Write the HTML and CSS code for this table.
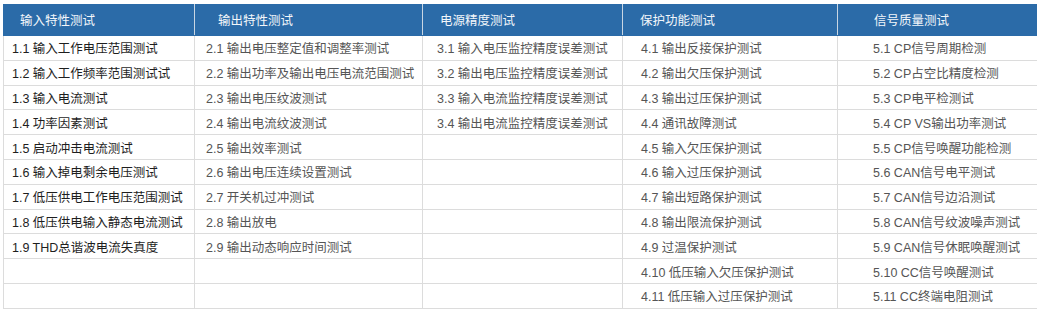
FILE: index.html
```html
<!DOCTYPE html>
<html lang="zh-CN">
<head>
  <meta charset="UTF-8">
  <title>测试项目</title>
  <link rel="stylesheet" href="styles.css">
</head>
<body>

  <table class="test-table">
    <colgroup>
      <col class="c1">
      <col class="c2">
      <col class="c3">
      <col class="c4">
      <col class="c5">
    </colgroup>
    <thead>
      <tr>
        <th class="p1">输入特性测试</th>
        <th class="p2">输出特性测试</th>
        <th class="p3">电源精度测试</th>
        <th class="p4">保护功能测试</th>
        <th class="p5">信号质量测试</th>
      </tr>
    </thead>
    <tbody>
      <tr>
        <td class="p1 main">1.1 输入工作电压范围测试</td>
        <td class="p2">2.1 输出电压整定值和调整率测试</td>
        <td class="p3">3.1 输入电压监控精度误差测试</td>
        <td class="p4">4.1 输出反接保护测试</td>
        <td class="p5">5.1 CP信号周期检测</td>
      </tr>
      <tr>
        <td class="p1 main">1.2 输入工作频率范围测试试</td>
        <td class="p2">2.2 输出功率及输出电压电流范围测试</td>
        <td class="p3">3.2 输出电压监控精度误差测试</td>
        <td class="p4">4.2 输出欠压保护测试</td>
        <td class="p5">5.2 CP占空比精度检测</td>
      </tr>
      <tr>
        <td class="p1 main">1.3 输入电流测试</td>
        <td class="p2">2.3 输出电压纹波测试</td>
        <td class="p3">3.3 输入电流监控精度误差测试</td>
        <td class="p4">4.3 输出过压保护测试</td>
        <td class="p5">5.3 CP电平检测试</td>
      </tr>
      <tr>
        <td class="p1 main">1.4 功率因素测试</td>
        <td class="p2">2.4 输出电流纹波测试</td>
        <td class="p3">3.4 输出电流监控精度误差测试</td>
        <td class="p4">4.4 通讯故障测试</td>
        <td class="p5">5.4 CP VS输出功率测试</td>
      </tr>
      <tr>
        <td class="p1 main">1.5 启动冲击电流测试</td>
        <td class="p2">2.5 输出效率测试</td>
        <td class="p3"></td>
        <td class="p4">4.5 输入欠压保护测试</td>
        <td class="p5">5.5 CP信号唤醒功能检测</td>
      </tr>
      <tr>
        <td class="p1 main">1.6 输入掉电剩余电压测试</td>
        <td class="p2">2.6 输出电压连续设置测试</td>
        <td class="p3"></td>
        <td class="p4">4.6 输入过压保护测试</td>
        <td class="p5">5.6 CAN信号电平测试</td>
      </tr>
      <tr>
        <td class="p1 main">1.7 低压供电工作电压范围测试</td>
        <td class="p2">2.7 开关机过冲测试</td>
        <td class="p3"></td>
        <td class="p4">4.7 输出短路保护测试</td>
        <td class="p5">5.7 CAN信号边沿测试</td>
      </tr>
      <tr>
        <td class="p1 main">1.8 低压供电输入静态电流测试</td>
        <td class="p2">2.8 输出放电</td>
        <td class="p3"></td>
        <td class="p4">4.8 输出限流保护测试</td>
        <td class="p5">5.8 CAN信号纹波噪声测试</td>
      </tr>
      <tr>
        <td class="p1 main">1.9 THD总谐波电流失真度</td>
        <td class="p2">2.9 输出动态响应时间测试</td>
        <td class="p3"></td>
        <td class="p4">4.9 过温保护测试</td>
        <td class="p5">5.9 CAN信号休眠唤醒测试</td>
      </tr>
      <tr>
        <td class="p1 main"></td>
        <td class="p2"></td>
        <td class="p3"></td>
        <td class="p4">4.10 低压输入欠压保护测试</td>
        <td class="p5">5.10 CC信号唤醒测试</td>
      </tr>
      <tr>
        <td class="p1 main"></td>
        <td class="p2"></td>
        <td class="p3"></td>
        <td class="p4">4.11 低压输入过压保护测试</td>
        <td class="p5">5.11 CC终端电阻测试</td>
      </tr>
    </tbody>
  </table>

</body>
</html>
```

FILE: styles.css
```css
body {
  font-family: "Liberation Sans", Arial, "Noto Sans CJK SC", sans-serif;
  font-size: 12.5px;
  color: #555;
  background-color: #fff;
  margin: 4px 5px 0 3px;
  padding: 0;
}
.test-table {
  border-collapse: collapse;
  table-layout: fixed;
  width: 1034px;
}
.c1 { width: 191px; }
.c2 { width: 228px; }
.c3 { width: 200px; }
.c4 { width: 215px; }
.c5 { width: 200px; }
.test-table th {
  background-color: #2b6ba8;
  color: #f2f6fa;
  font-weight: normal;
  text-align: left;
  height: 31px;
  padding-top: 0;
  padding-bottom: 2px;
  border: 1px solid #2b6ba8;
  border-right-color: #c9d6e3;
  box-sizing: border-box;
}
.test-table th:last-child {
  border-right-color: #2b6ba8;
}
.test-table td {
  height: 24.8px;
  padding-top: 0;
  padding-bottom: 0;
  border: 1px solid #dcdcdc;
  white-space: nowrap;
  box-sizing: border-box;
}
.test-table td.main {
  color: #1e1e1e;
}
th.p1 { padding-left: 16px; }
th.p2 { padding-left: 23px; }
th.p3 { padding-left: 17px; }
th.p4 { padding-left: 17px; }
th.p5 { padding-left: 36px; }
td.p1 { padding-left: 8px; }
td.p2 { padding-left: 11px; }
td.p3 { padding-left: 14px; }
td.p4 { padding-left: 18px; }
td.p5 { padding-left: 35px; }
```
